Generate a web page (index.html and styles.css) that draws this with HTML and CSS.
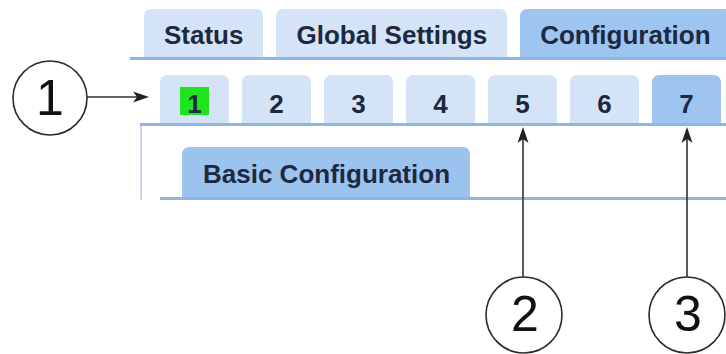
FILE: index.html
```html
<!DOCTYPE html>
<html lang="en">
<head>
    <meta charset="UTF-8">
    <meta name="viewport" content="width=device-width, initial-scale=1.0">
    <title>Configuration Tabs</title>
    <link rel="stylesheet" href="styles.css">
</head>
<body>
    <div class="page">
        <div class="top-bar">
            <div class="tab">Status</div>
            <div class="tab">Global Settings</div>
            <div class="tab active">Configuration</div>
        </div>

        <div class="num-bar">
            <div class="num-tab"><span class="num lit">1</span></div>
            <div class="num-tab"><span class="num">2</span></div>
            <div class="num-tab"><span class="num">3</span></div>
            <div class="num-tab"><span class="num">4</span></div>
            <div class="num-tab"><span class="num">5</span></div>
            <div class="num-tab"><span class="num">6</span></div>
            <div class="num-tab active"><span class="num">7</span></div>
        </div>

        <div class="panel">
            <div class="sub-bar">
                <div class="tab active sub">Basic Configuration</div>
            </div>
        </div>

        <!-- callouts drawn over the screenshot -->
        <svg class="callouts" width="726" height="354" viewBox="0 0 726 354">
            <g fill="none" stroke="#2a2a2a" stroke-width="1.6">
                <circle cx="50" cy="98" r="37"/>
                <circle cx="524" cy="315" r="38"/>
                <circle cx="687" cy="315" r="38"/>
            </g>
            <g stroke="#333" stroke-width="1.6">
                <line x1="87" y1="97" x2="137" y2="97"/>
                <line x1="523" y1="277" x2="523" y2="138"/>
                <line x1="687" y1="277" x2="687" y2="138"/>
            </g>
            <g fill="#222">
                <polygon points="149,97 133,91.5 137,97 133,102.5"/>
                <polygon points="523,127 517.5,143 523,139 528.5,143"/>
                <polygon points="687,127 681.5,143 687,139 692.5,143"/>
            </g>
            <g class="callout-text" fill="#111" text-anchor="middle">
                <text x="50" y="115">1</text>
                <text x="525" y="331">2</text>
                <text x="688" y="331">3</text>
            </g>
        </svg>
    </div>
</body>
</html>
```

FILE: styles.css
```css
body {
    margin: 0;
    background-color: #fff;
    font-family: "Liberation Sans", Arial, sans-serif;
    overflow: hidden;
}
.page {
    position: relative;
    width: 726px;
    height: 354px;
    overflow: hidden;
}
.top-bar {
    display: flex;
    gap: 13px;
    margin-left: 130px;
    padding: 9px 0 0 14px;
    border-bottom: 3px solid #8db5e5;
    white-space: nowrap;
}
.tab {
    flex: none;
    height: 48px;
    box-sizing: border-box;
    padding: 12px 20px 0;
    background-color: #d4e4f6;
    border-radius: 7px 7px 0 0;
    color: #1c2940;
    font-size: 26px;
    font-weight: bold;
    line-height: 29px;
}
.tab.active {
    background-color: #9ec5f0;
}
.num-bar {
    display: flex;
    gap: 13px;
    margin: 15px 0 0 140px;
    padding-left: 20px;
    border-bottom: 3px solid #8db5e5;
}
.num-tab {
    display: flex;
    justify-content: center;
    width: 69px;
    height: 48px;
    box-sizing: border-box;
    padding-top: 12px;
    background-color: #d4e4f6;
    border-radius: 7px 7px 0 0;
}
.num-tab.active {
    background-color: #9ec5f0;
}
.num {
    padding: 6px 7px 0;
    height: 22px;
    color: #1c2940;
    font-size: 26px;
    font-weight: bold;
    line-height: 22px;
}
.num.lit {
    background-color: #1fe31f;
}
.panel {
    margin-left: 140px;
    padding-top: 21px;
    border-left: 2px solid #cdd8e7;
}
.sub-bar {
    display: flex;
    margin-left: 18px;
    padding-left: 22px;
    border-bottom: 3px solid #92b5e0;
}
.tab.sub {
    height: 50px;
    padding: 13px 20px 0 21px;
    background-color: #9cc3ee;
}
.callouts {
    position: absolute;
    left: 0;
    top: 0;
}
.callout-text {
    font-family: "Liberation Sans", Arial, sans-serif;
    font-size: 50px;
}
```
